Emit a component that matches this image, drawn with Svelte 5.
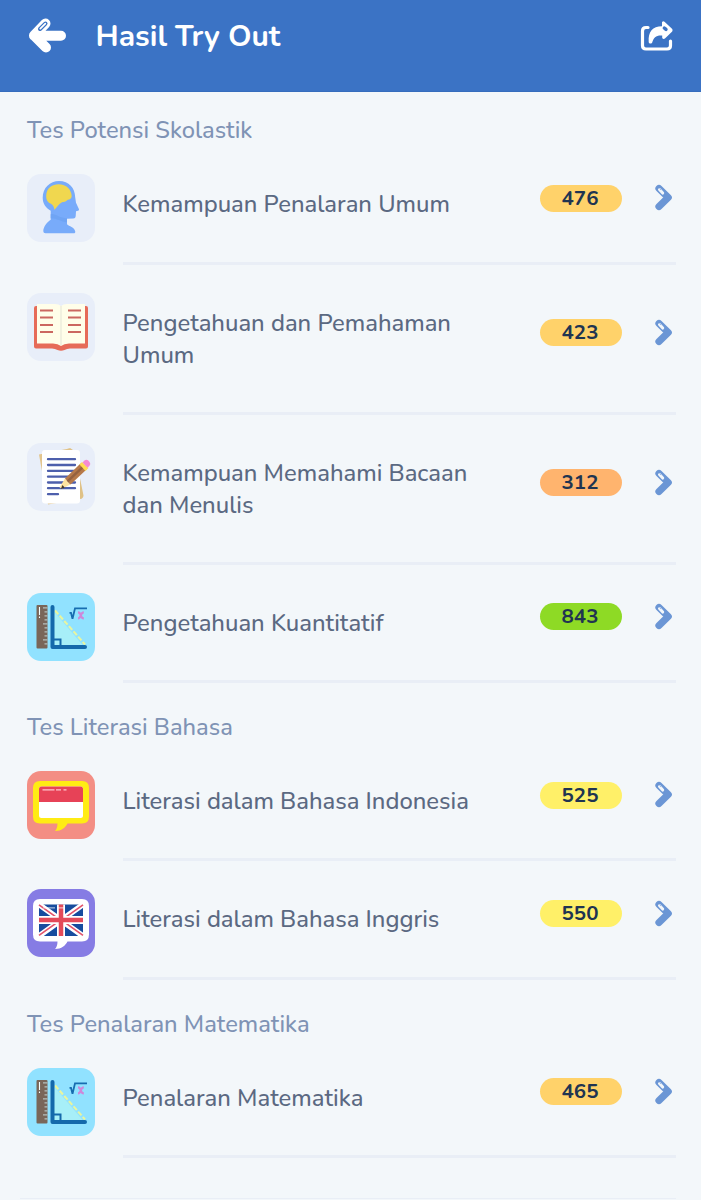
<script lang="ts">
  interface Subtest {
    name: string;
    icon: string;
    score: number;
    tone: string;
  }

  interface Section {
    title: string;
    items: Subtest[];
  }

  const sections: Section[] = [
    {
      title: 'Tes Potensi Skolastik',
      items: [
        { name: 'Kemampuan Penalaran Umum', icon: 'head', score: 476, tone: 'amber' },
        { name: 'Pengetahuan dan Pemahaman Umum', icon: 'book', score: 423, tone: 'amber' },
        { name: 'Kemampuan Memahami Bacaan dan Menulis', icon: 'paper', score: 312, tone: 'orange' },
        { name: 'Pengetahuan Kuantitatif', icon: 'math', score: 843, tone: 'green' }
      ]
    },
    {
      title: 'Tes Literasi Bahasa',
      items: [
        { name: 'Literasi dalam Bahasa Indonesia', icon: 'indonesia', score: 525, tone: 'yellow' },
        { name: 'Literasi dalam Bahasa Inggris', icon: 'english', score: 550, tone: 'yellow' }
      ]
    },
    {
      title: 'Tes Penalaran Matematika',
      items: [
        { name: 'Penalaran Matematika', icon: 'math', score: 465, tone: 'amber' }
      ]
    }
  ];
</script>

<div class="page">
  <header>
    <button class="back" aria-label="Kembali">
      <svg width="38" height="36" viewBox="0 0 38 36">
        <path d="M17.500 5.500 6 17.500l12 12M6 17.800h27" fill="none" stroke="#fff" stroke-width="10" stroke-linecap="round" stroke-linejoin="round" />
        <path d="M6 13h13v9H8z" fill="#fff" />
        <path d="m17.500 5.500-5.500 5.500" stroke="#3b73c5" stroke-width="4" stroke-linecap="round" />
        <path d="m17.300 5.700-5 5" stroke="#fff" stroke-width="1.700" stroke-linecap="round" />
      </svg>
    </button>
    <h1>Hasil Try Out</h1>
    <button class="share" aria-label="Bagikan">
      <svg width="34" height="32" viewBox="0 0 34 32">
        <path d="M8 7.500H6Q2.500 7.500 2.500 11v14.500Q2.500 29 6 29h21q3.500 0 3.500-3.500V21" fill="none" stroke="#fff" stroke-width="3.200" stroke-linecap="round" />
        <path d="M22 2.200q1-1.700 2.500-.5l7.500 7q1.200 1.300.2 2.800l-7 6.800q-1.700 1.500-3-.2V15.500c-6-.5-8.500 2-10 7-.5 1.500-3.500 1.200-3.500-.6C8 11.500 12.500 6.500 22 6.200z" fill="#fff" />
        <path d="m24.300 8 1.700 1.400" stroke="#3b73c5" stroke-width="3.400" stroke-linecap="round" />
      </svg>
    </button>
  </header>

  <main>
    {#each sections as section}
      <section>
        <h2>{section.title}</h2>
        {#each section.items as item}
          <div class="row">
            <div class="icon {item.icon}">
              <svg width="68" height="68" viewBox={item.icon === 'head' ? '0 0.2 68 68' : '0 -1.4 68 68'}>
                {#if item.icon === 'head'}
                  <path d="M23.700 37C18.500 34 15.700 29.500 15.700 24 15.700 14 23 7.200 32 7.200c10 0 16 7 16.200 16.300L49 29l3 6.500q.3 1.200-1 1.500l-2 .4-.3 5q-.2 2.300-2.300 2.300L40 45v5.500c2 2 7.500 3 8.200 7 .3 1.500-.3 2-1.500 2H18.500q-2.200 0-2.200-2C16.300 53 20 48.500 23.700 46z" fill="#78abfa" />
                  <path d="M23.700 40.500c4-1.500 9 4 16.300 4v4c-6-.5-10-4-16.300-4z" fill="#6fa4f4" />
                  <path d="M27.500 36c-.5-2-1-4.500-3.500-6-3-1-5-4-4.800-8C19.500 14 25.500 10.500 31.500 10.500c8 0 13 5.500 13.200 12q-.5 3.300-4 3.500c-2 2.500-4 1.700-6.500 3-3 1.500-4 4.500-6.700 7z" fill="#f0d74f" />
                {:else if item.icon === 'book'}
                  <path d="M9 11.500h50q2 0 2 2V52q0 2-2 2H43q-3 0-5.500 1.700-3.500 1.500-7 0Q28 54 25 54H9q-2 0-2-2V13.500q0-2 2-2z" fill="#e66b58" />
                  <path d="M10 9.500h18q4 0 6 2 2-2 6-2h18V49H42q-5 0-8 2.500-3-2.500-8-2.500H10z" fill="#fffee9" />
                  <path d="M34 11.500v39" stroke="#eeeedc" stroke-width="1.600" />
                  <path d="M13 16h13M13 23.200h13M13 30.500h13M13 37.700h13M41 16h13M41 23.200h13M41 30.500h13M41 37.700h13" stroke="#cb6760" stroke-width="2" />
                {:else if item.icon === 'paper'}
                  <path d="m12 10 30-6 13 50-34 6z" fill="#e3c58d" />
                  <path d="m39 5.500 4-2 4.500 3L56.500 51q0 3-4 3.500L42 57z" fill="#dfc186" />
                  <rect x="15" y="5.500" width="38" height="53.500" rx="3" fill="#fff" />
                  <path d="M21 14.800h27M21 20.600h27M21 26.500h27M21 32.300h27M21 38.100h27M21 43.800h27M21 49.800h10" stroke="#4d5fac" stroke-width="2.300" stroke-linecap="round" />
                  <path d="m38 34 5.500 6-8.500 4-2.500-1z" fill="#ffe3a0" />
                  <path d="m38 34 15.500-15 6 6-16 15z" fill="#b6794a" />
                  <path d="m40.500 37 16-15" stroke="#95613f" stroke-width="2.500" />
                  <path d="m52.500 20 2.500-2.500 6.500 6-3 3z" fill="#ffdd4f" />
                  <path d="m55.500 18 2-2q2-1.500 4 .3l1.200 1.500q1.300 1.700-.2 3.500l-2 2z" fill="#f58bd0" />
                  <path d="m35.500 40.500-1.700 4 4-1.200z" fill="#43362f" />
                {:else if item.icon === 'math'}
                  <path d="M27 17v34h29z" fill="#a7eff8" />
                  <path d="m28 16 30 34" stroke="#e7f5a0" stroke-width="2.200" stroke-dasharray="5 2" />
                  <rect x="9.500" y="10.500" width="11" height="43.500" rx="1" fill="#796659" />
                  <path d="M16 13.500h4.500M17.500 17.500h3M17.500 21.500h3M17.500 25.500h3M16 29.500h4.500M17.500 33.500h3M17.500 37.500h3M17.500 41.500h3M16 45.500h4.500M17.500 49.500h3" stroke="#b4c0bd" stroke-width="1.300" />
                  <path d="M12.500 12.500v8M12.500 22v1.500" stroke="#f4ffff" stroke-width="1.100" />
                  <path d="M25.500 12.500v40H58" fill="none" stroke="#1469ab" stroke-width="4" stroke-linecap="round" stroke-linejoin="round" />
                  <path d="M27 45h6.500v6.500" fill="none" stroke="#1469ab" stroke-width="2" />
                  <path d="M42.500 18.500h1.500l1.500 6 2.500-10.500h12" fill="none" stroke="#176db0" stroke-width="1.800" />
                  <path d="M51 18q2 0 2.800 3t3 3M56.800 18q-2 0-3 3T51 24" fill="none" stroke="#ce88da" stroke-width="2.200" />
                {:else}
                  <path d="M13 8.500h42q7 0 7 7V44q0 7-7 7H40.500c-2 4-6 7.500-12.500 7.500 1.500-1.500 2.500-4 2.500-7.500H13q-7 0-7-7V15.500q0-7 7-7z" fill={item.icon === 'english' ? '#fff' : '#ffec14'} />
                  {#if item.icon === 'indonesia'}
                    <rect x="12" y="14" width="44" height="31.500" rx="2.500" fill="#fff" />
                    <path d="M12 29.700V16.500q0-2.500 2.500-2.500h39q2.500 0 2.500 2.500v13.200z" fill="#e74257" />
                    <path d="M15.500 17.500h12M29 17.500h5M36.500 17.500h3" stroke="#ffc6cd" stroke-width="1.200" />
                  {:else}
                    <path d="M12 14h44v31.500H12z" fill="#174c9e" />
                    <path d="m12 14 44 31.500M56 14 12 45.500" stroke="#fff" stroke-width="5.500" />
                    <path d="m12 14.500 19 13.500M56 14.500 37 28M31 31.500 12 45M37 31.500 56 45" stroke="#e3556c" stroke-width="1.700" />
                    <path d="M34 14v31.500M12 29.700h44" stroke="#fff" stroke-width="8" />
                    <path d="M34 14v31.500M12 29.700h44" stroke="#e44a59" stroke-width="4.500" />
                    <path d="M16 17.500h12M30 17.500h8" stroke="#fff" stroke-width=".8" />
                  {/if}
                {/if}
              </svg>
            </div>
            <div class="content">
              <p>{item.name}</p>
              <span class="badge {item.tone}">{item.score}</span>
              <svg class="chevron" width="18" height="27" viewBox="0 0 18 27">
                <path d="M4 4.500 13.200 13.500 4 22.500" fill="none" stroke="#6b96d5" stroke-width="7.200" stroke-linecap="round" stroke-linejoin="round" />
                <path d="m4.500 5.500 3.200 3.600" stroke="#f3f7fa" stroke-width="3" stroke-linecap="round" />
                <path d="m4.500 4.500 1.500 1.600" stroke="#9ab7e3" stroke-width="1" />
              </svg>
            </div>
          </div>
        {/each}
      </section>
    {/each}
    <hr />
  </main>
</div>

<style>
  :global(body) {
    margin: 0;
    background: #f3f7fa;
  }

  .page {
    height: 1200px;
    overflow: hidden;
    background: #f3f7fa;
    font-family: Nunito, Lato, 'Open Sans', sans-serif;
  }

  header {
    display: flex;
    align-items: flex-start;
    box-sizing: border-box;
    height: 92px;
    padding: 18px 27px 0 28px;
    background: #3b73c5;
    border-bottom: 1px solid #366dbd;
  }

  button {
    padding: 0;
    border: 0;
    background: none;
  }

  button svg {
    display: block;
  }

  .share {
    margin: 2px 0 0 auto;
  }

  h1 {
    margin: 0 0 0 29.5px;
    color: #fff;
    font-size: 30px;
    font-weight: 700;
    line-height: 38px;
  }

  h2 {
    margin: 0;
    padding: 28px 0 0 27px;
    color: #7f93b5;
    font-size: 23.7px;
    font-weight: 500;
    line-height: 32px;
  }

  section:first-child h2 {
    padding-top: 22.4px;
  }

  .row {
    display: flex;
    align-items: flex-start;
    padding: 28px 25px 0 27px;
  }

  .icon {
    flex: none;
    height: 68px;
    border-radius: 14px;
    background: #e8eef9;
    overflow: hidden;
  }

  .icon.math {
    background: #91e2ff;
  }

  .icon.indonesia {
    background: #f38e84;
  }

  .icon.english {
    background: #867ce4;
  }

  .content {
    flex: 1;
    display: flex;
    align-items: center;
    margin-left: 27.5px;
    padding-bottom: 41px;
    border-bottom: 3px solid #e9eef6;
  }

  p {
    width: 370px;
    margin: 0;
    padding-top: 14px;
    color: #5b6982;
    font-size: 23.8px;
    font-weight: 500;
    line-height: 32.15px;
  }

  .badge {
    width: 82px;
    margin: 1.4px 0 0 47.5px;
    border-radius: 14px;
    color: #203451;
    font-size: 20.5px;
    font-weight: 700;
    line-height: 27px;
    text-align: center;
    text-indent: -2px;
  }

  .amber {
    background: #ffd26a;
  }

  .orange {
    background: #ffb46e;
  }

  .green {
    background: #8eda25;
  }

  .yellow {
    background: #fff068;
  }

  .chevron {
    margin: 1px 0 0 33px;
  }

  hr {
    height: 1px;
    margin: 40.5px 25px 0 20px;
    border: 0;
    background: #e9eef6;
  }
</style>
